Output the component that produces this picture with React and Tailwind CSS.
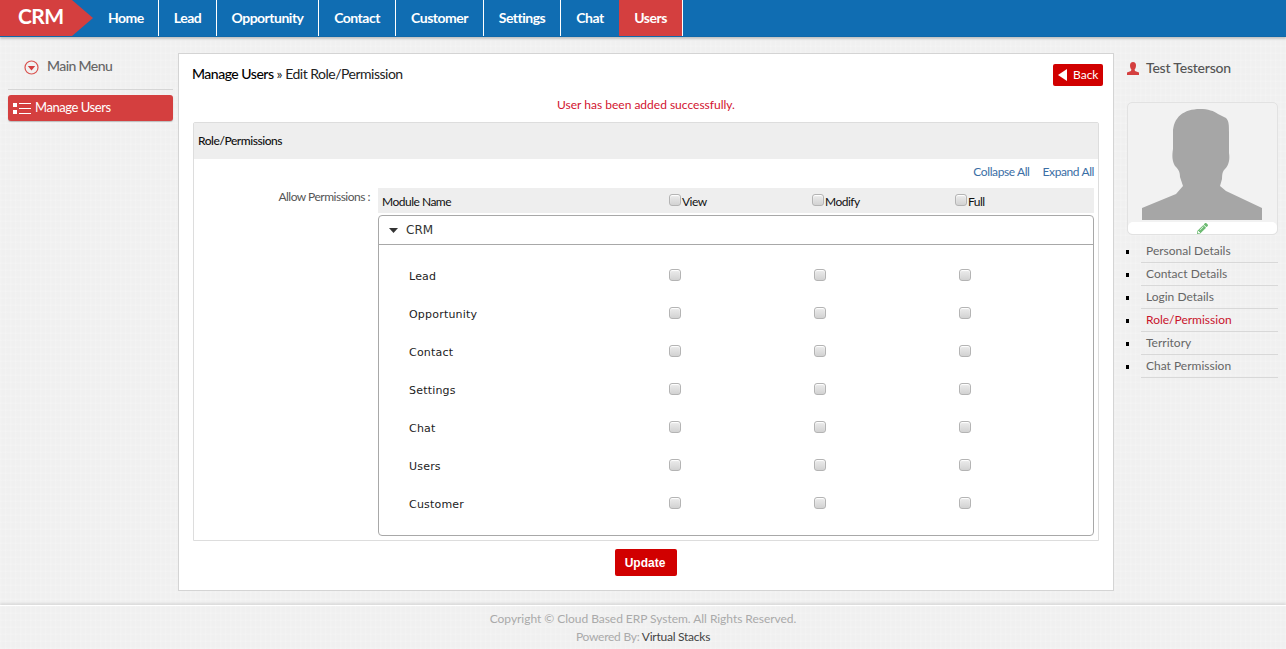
import { FaPencilAlt } from "react-icons/fa";

const navItems = [
  { label: "Home", width: "w-[66px] pl-[15px]" },
  { label: "Lead", width: "w-[58px] justify-center" },
  { label: "Opportunity", width: "w-[102px] justify-center" },
  { label: "Contact", width: "w-[77px] justify-center" },
  { label: "Customer", width: "w-[88px] justify-center" },
  { label: "Settings", width: "w-[77px] justify-center" },
  { label: "Chat", width: "w-[58px] justify-center" },
  { label: "Users", width: "w-[64px] justify-center" },
];
const modules = ["Lead", "Opportunity", "Contact", "Settings", "Chat", "Users", "Customer"];
const sideLinks = ["Personal Details", "Contact Details", "Login Details", "Role/Permission", "Territory", "Chat Permission"];

const Check = () => (
  <input
    type="checkbox"
    readOnly
    className="appearance-none block w-[12px] h-[12px] rounded-[3px] border border-[#b4b4b4] bg-[linear-gradient(#ececec,#d2d2d2)] shadow-[inset_0_1px_1px_#fff]"
  />
);

const App = () => {
  return (
    <div className="w-[1286px] h-[649px] overflow-hidden flex flex-col font-['Lato','Liberation_Sans',sans-serif] bg-[#f0f0f0] bg-[repeating-linear-gradient(90deg,rgba(255,255,255,0.2)_0px,transparent_2px,transparent_5px),repeating-linear-gradient(0deg,rgba(255,255,255,0.15)_0px,transparent_3px,transparent_7px)]">
      {/* Top navbar */}
      <div className="h-[37px] shrink-0 flex bg-[#106db2] border-b border-[#0f68aa] shadow-[0_2px_2px_#c4c4c4]">
        <div className="w-[93px] h-full bg-[#d43f3f] [clip-path:polygon(0_0,72px_0,100%_50%,72px_100%,0_100%)] pl-[18px] text-white text-[21px] tracking-[-0.6px] font-bold leading-[31px]">
          CRM
        </div>
        {navItems.map((item) => (
          <div
            key={item.label}
            className={`h-full flex items-center text-white text-sm tracking-[-0.5px] font-bold border-r border-white ${item.width} ${
              item.label === "Users" ? "bg-[#d43f3f]" : ""
            } ${item.label === "Chat" ? "border-r-0" : ""}`}
          >
            {item.label}
          </div>
        ))}
      </div>

      <div className="h-[568px] shrink-0 flex pt-4">
        {/* Left menu */}
        <div className="w-[178px] shrink-0 pl-2 pr-[5px]">
          <div className="h-[37px] flex items-center border-b border-[#d6d6d6] pl-[16px] pb-[10px] text-sm tracking-[-0.6px] font-medium text-[#666]">
            <svg width="15" height="15" viewBox="0 0 15 15" className="mr-[8px] mt-[2px]">
              <circle cx="7.5" cy="7.5" r="6.5" fill="none" stroke="#d9534f" strokeWidth="1.2" />
              <path d="M3.8 6 H11.2 L7.5 10.5 Z" fill="#d43f3f" />
            </svg>
            Main Menu
          </div>
          <div className="mt-[5px] h-[26px] flex items-center bg-[#d43f3f] rounded-[3px] pl-[5px] text-white text-[13px] tracking-[-0.45px] shadow-[0_1px_1px_#bbb]">
            <svg width="18" height="13" viewBox="0 0 18 13" className="mr-[4px]">
              <rect x="0" y="1" width="4" height="4" fill="#fff" />
              <rect x="0" y="8" width="4" height="4" fill="#fff" />
              <path d="M6 1.5H18M6 6.5H18M6 11.5H18" stroke="#fff" strokeWidth="1" />
            </svg>
            Manage Users
          </div>
        </div>

        {/* Main panel */}
        <div className="w-[936px] h-[538px] shrink-0 bg-white border border-[#d4d4d4] px-[14px] pt-[10px]">
          <div className="flex justify-between">
            <div className="ml-[-1px] text-sm tracking-[-0.5px] text-[#222] leading-5">
              <span className="font-medium text-black">Manage Users</span> » Edit Role/Permission
            </div>
            <div className="mr-[-4px] h-[22px] w-[50px] flex items-center bg-[#d10000] rounded-[2px] pl-[5px] text-white text-xs">
              <svg width="9" height="12" viewBox="0 0 9 12" className="mr-[6px]">
                <path d="M9 0V12L0 6Z" fill="#fff" />
              </svg>
              Back
            </div>
          </div>
          <div className="mt-[10px] h-[18px] text-center text-xs leading-[18px] text-[#d2132f]">
            User has been added successfully.
          </div>

          {/* Role box */}
          <div className="mt-[8px] w-[906px] h-[419px] border border-[#dddddd] rounded-t-[2px]">
            <div className="h-[36px] bg-[#eeeeee] pl-[4px] flex items-center text-xs tracking-[-0.45px] font-medium text-[#111]">
              Role/Permissions
            </div>
            <div className="flex justify-end gap-[13px] pr-[4px] pt-[6px] h-[29px] text-xs tracking-[-0.4px] text-[#3a6ea5] leading-[14px]">
              <span>Collapse All</span>
              <span>Expand All</span>
            </div>
            <div className="flex">
              <div className="w-[176px] shrink-0 text-right text-xs tracking-[-0.5px] text-[#555] pt-[1px]">Allow Permissions :</div>
              <div className="ml-[8px] w-[716px]">
                <div className="h-[25px] bg-[#eeeeee] flex items-end pb-[4px] pl-[4px] text-xs tracking-[-0.5px] text-[#111] leading-[15px]">
                  <span className="w-[287px]">Module Name</span>
                  <span className="w-[143px] flex mb-[-1px]"><span className="mb-[4px] mr-[1px]"><Check /></span>View</span>
                  <span className="w-[143px] flex mb-[-1px]"><span className="mb-[4px] mr-[1px]"><Check /></span>Modify</span>
                  <span className="flex mb-[-1px]"><span className="mb-[4px] mr-[1px]"><Check /></span>Full</span>
                </div>
                <div className="mt-[2px] h-[321px] border border-[#a8a8a8] rounded-[4px]">
                  <div className="h-[29px] border-b border-[#a8a8a8] flex items-center pl-[10px] text-xs text-[#333] font-['DejaVu_Sans',sans-serif]">
                    <svg width="9" height="5" viewBox="0 0 9 5" className="mr-[8px]">
                      <path d="M0 0H9L4.5 5Z" fill="#333" />
                    </svg>
                    CRM
                  </div>
                  <div className="pt-[12px]">
                    {modules.map((name) => (
                      <div key={name} className="h-[38px] flex items-center pl-[30px] text-[11px] tracking-[0.2px] text-[#222] font-['DejaVu_Sans',sans-serif]">
                        <span className="w-[260px] mt-[2px]">{name}</span>
                        <span className="w-[145px] mb-[2px]"><Check /></span>
                        <span className="w-[145px] mb-[2px]"><Check /></span>
                        <span className="mb-[2px]"><Check /></span>
                      </div>
                    ))}
                  </div>
                </div>
              </div>
            </div>
          </div>

          <div className="mt-[8px] flex justify-center">
            <div className="w-[62px] h-[27px] pr-[2px] flex items-center justify-center bg-[#d10000] rounded-[2px] text-white text-xs font-bold font-['Liberation_Sans',sans-serif]">
              Update
            </div>
          </div>
        </div>

        {/* Right column */}
        <div className="ml-[12px] w-[152px] shrink-0">
          <div className="h-[30px] flex items-center text-sm tracking-[-0.2px] font-medium text-[#555]">
            <svg width="14" height="14" viewBox="0 0 14 14" className="mr-[6px] mt-[1px]">
              <path d="M7 0C9 0 10 1.4 10 3.4C10 5.4 9 7 8.6 7.6L9 9L13 10.5V13H1V10.5L5 9L5.4 7.6C5 7 4 5.4 4 3.4C4 1.4 5 0 7 0Z" fill="#d43f3f" />
            </svg>
            Test Testerson
          </div>
          <div className="mt-[19px] ml-[1px] w-[151px] h-[133px] border border-[#e2e2e2] rounded-[5px] flex flex-col bg-[#f2f2f2]">
            <svg width="120" height="111" viewBox="0 0 120 111" className="mt-[6px] ml-[14px] shrink-0">
              <path
                d="M58 0C66 0 72 2 76 5L84 9C87 12 87 16 87 24L87 44C88 50 87 56 83 60C81 62 80 64 80 70L78 77L84 82L120 99L120 111L0 111L0 99L34 85L41 77L38 68C38 62 36 60 33 57C30 52 30 46 31 40L31 24C31 8 42 0 58 0Z"
                fill="#a6a6a6"
              />
            </svg>
            <div className="mt-[2px] w-[149px] h-[13px] bg-white rounded-[5px] flex items-center justify-center">
              <FaPencilAlt className="text-[#6dbb72] text-[11px]" />
            </div>
          </div>
          <div className="mt-[5px]">
            {sideLinks.map((link) => (
              <div key={link} className="relative ml-[15px] h-[23px] w-[137px] border-b border-[#d8d8d8] pl-[5px] flex items-center text-xs">
                <span className="absolute left-[-15px] top-[10px] w-[3px] h-[4px] bg-black" />
                <span className={link === "Role/Permission" ? "text-[#c9142c]" : "text-[#666]"}>{link}</span>
              </div>
            ))}
          </div>
        </div>
      </div>

      {/* Footer */}
      <div className="flex-1 border-t border-white shadow-[0_-2px_2px_#dcdcdc] text-center text-xs text-[#aaa] pt-[4px]">
        <div className="h-[18px] leading-[18px] tracking-[-0.04px]">Copyright © Cloud Based ERP System. All Rights Reserved.</div>
        <div className="h-[18px] leading-[18px] tracking-[-0.25px]">
          Powered By: <span className="text-[#444]">Virtual Stacks</span>
        </div>
      </div>
    </div>
  );
};

export default App;
